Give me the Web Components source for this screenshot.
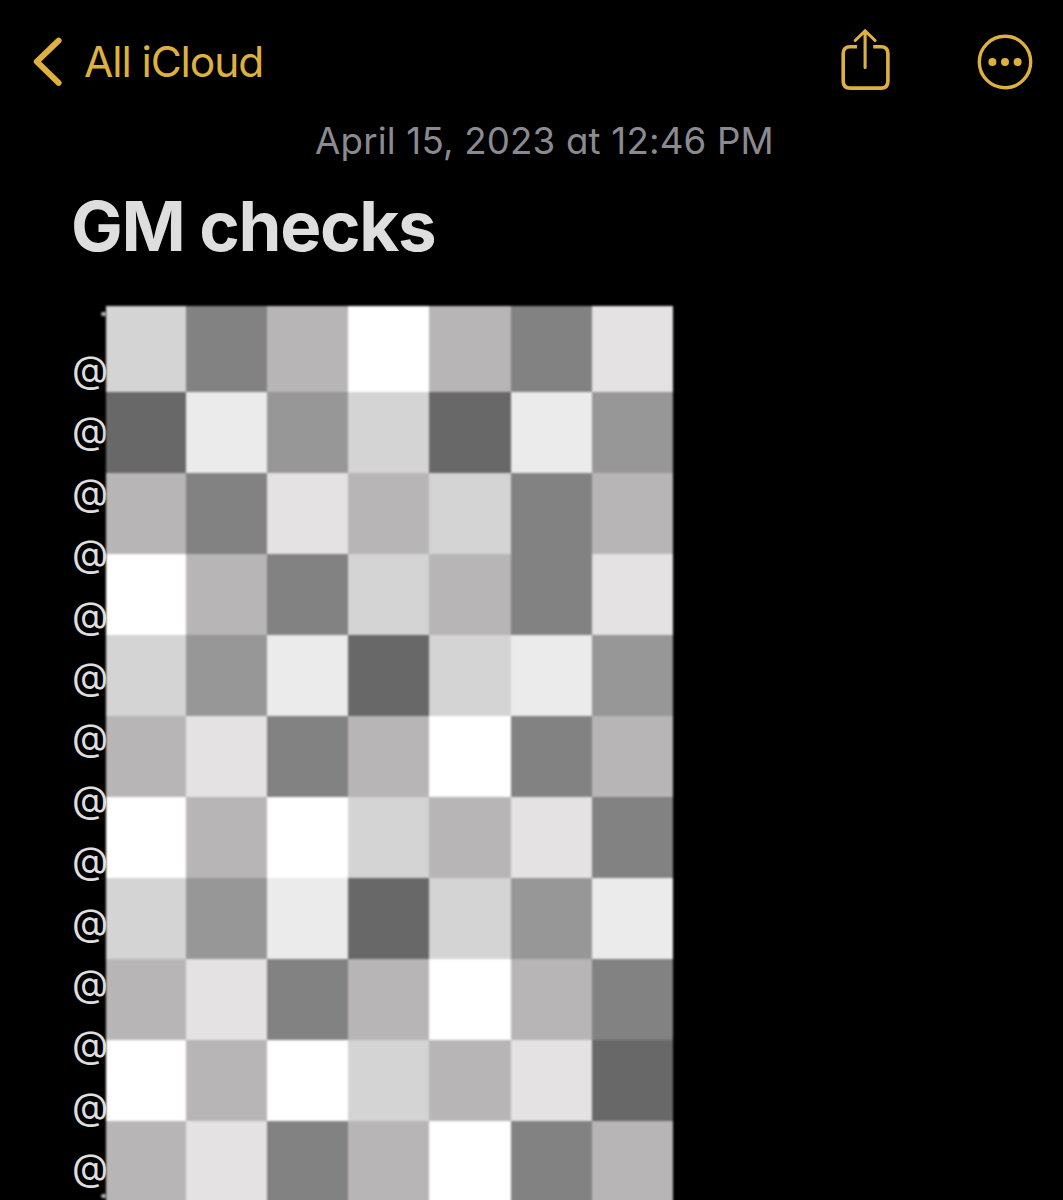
<!DOCTYPE html>
<html lang="en">
<head>
<meta charset="utf-8">
<title>Notes</title>
<style>
html,body{margin:0;background:#000;height:1200px;overflow:hidden}
body{font-family:Inter,"Liberation Sans",sans-serif}
</style>
</head>
<body>
<notes-app>
  <nav-bar slot="bar">All iCloud</nav-bar>
  <note-date slot="date">April 15, 2023 at 12:46 PM</note-date>
  <note-title slot="title">GM checks</note-title>
  <note-body slot="body"></note-body>
</notes-app>
<script>
const define = (name, html, setup) => customElements.define(name, class extends HTMLElement {
  connectedCallback() {
    if (this.shadowRoot) return;
    this.attachShadow({mode: 'open'}).innerHTML = html;
    if (setup) setup(this.shadowRoot);
  }
});

define('notes-app', `<style>
:host{display:flex;flex-direction:column;width:1063px;height:1200px;background:#000;overflow:hidden}
</style><slot name="bar"></slot><slot name="date"></slot><slot name="title"></slot><slot name="body"></slot>`);

define('back-button', `<style>
:host{display:flex;align-items:center;gap:22px;color:#deb13f;font-size:42.5px;line-height:52px;white-space:nowrap;letter-spacing:-1.1px}
svg{display:block;flex:none}
</style><svg width="30" height="52" viewBox="0 0 30 52" fill="none" stroke="#deb13f" stroke-width="6" stroke-linecap="round" stroke-linejoin="round"><path d="M26.6 4.6 4.8 25.7 26.6 46.8"/></svg><slot></slot>`);

define('share-icon', `<style>:host{display:block}svg{display:block}</style>
<svg width="50" height="64" viewBox="0 0 50 64" fill="none" stroke="#deb13f" stroke-width="3.6"><path d="M17 18.8H10.2Q3.2 18.8 3.2 25.8V53.2Q3.2 60.1 10.2 60.1H41Q47.9 60.1 47.9 53.2V25.8Q47.9 18.8 41 18.8H33.2"/><path d="M25.1 39.4V3.3M15.2 12.5 25.1 2.9 35.1 12.5" stroke-width="3.1" stroke-linecap="round"/></svg>`);

define('more-icon', `<style>:host{display:block}svg{display:block}</style>
<svg width="56" height="56" viewBox="0 0 56 56"><circle cx="28" cy="28" r="25.7" fill="none" stroke="#deb13f" stroke-width="3.4"/><g fill="#deb13f"><circle cx="15.4" cy="28" r="4"/><circle cx="28" cy="28" r="4"/><circle cx="40.6" cy="28" r="4"/></g></svg>`);

define('nav-bar', `<style>
:host{display:flex;align-items:center;justify-content:space-between;height:124px;padding:0 30px 0 32px;box-sizing:border-box}
.actions{display:flex;align-items:center;gap:87px}
share-icon{margin-top:-4px}
</style><back-button><slot></slot></back-button><div class="actions"><share-icon></share-icon><more-icon></more-icon></div>`);

define('note-date', `<style>
:host{display:block;padding-left:315px;height:69px;margin-top:-5px;line-height:44px;font-size:36.7px;color:#8b8a90;letter-spacing:.18px;white-space:nowrap;font-feature-settings:"cv11"}
</style><slot></slot>`);

define('note-title', `<style>
:host{display:block;padding-left:71px;height:118px;line-height:76px;font-size:69px;font-weight:700;color:#dedede;white-space:nowrap;letter-spacing:-1.35px}
</style><slot></slot>`);

define('mosaic-block', `<style>
:host{display:grid;grid-template-columns:80px repeat(6,81.17px);grid-template-rows:86px repeat(10,81px);filter:blur(.8px)}
</style>`, root => {
  const tones = {D:'#d4d4d4',G:'#828282',B:'#b8b5b6',W:'#fff',P:'#e5e2e3',K:'#686868',E:'#ebebeb',M:'#979797'};
  for (const c of 'DGBWBGPKEMDKEMBGPBDGBWBGDBGPDMEKDEMBPGBWGBWBWDBPGDMEKDMEBPGBWBGWBWDBPKBPGBWGB') {
    const tile = document.createElement('div');
    tile.style.background = tones[c];
    root.append(tile);
  }
});

define('note-body', `<style>
:host{display:flex;height:894px;padding-left:72px}
.lines{width:34px;flex:none;display:flex;flex-direction:column;align-items:flex-start;padding-top:33px;box-sizing:border-box;white-space:nowrap}
.lines span{flex:none;height:61.4px;line-height:61.4px;font-size:37.5px;color:#dedede;font-feature-settings:"cv11"}
mosaic-block{position:relative;flex:none;align-self:flex-start}
.edge{display:flex;flex-direction:column;justify-content:space-between;width:5px;height:886px;margin:6px 0 0 -5px;flex:none}
.edge i{height:4px;background:#bbb;border-radius:2px 0 0 2px;filter:blur(.8px)}
</style><div class="lines"></div><div class="edge"><i></i><i></i></div><mosaic-block></mosaic-block>`, root => {
  const lines = root.querySelector('.lines');
  for (let i = 0; i < 14; i++) {
    const line = document.createElement('span');
    line.textContent = '@';
    lines.append(line);
  }
});
</script>
</body>
</html>
